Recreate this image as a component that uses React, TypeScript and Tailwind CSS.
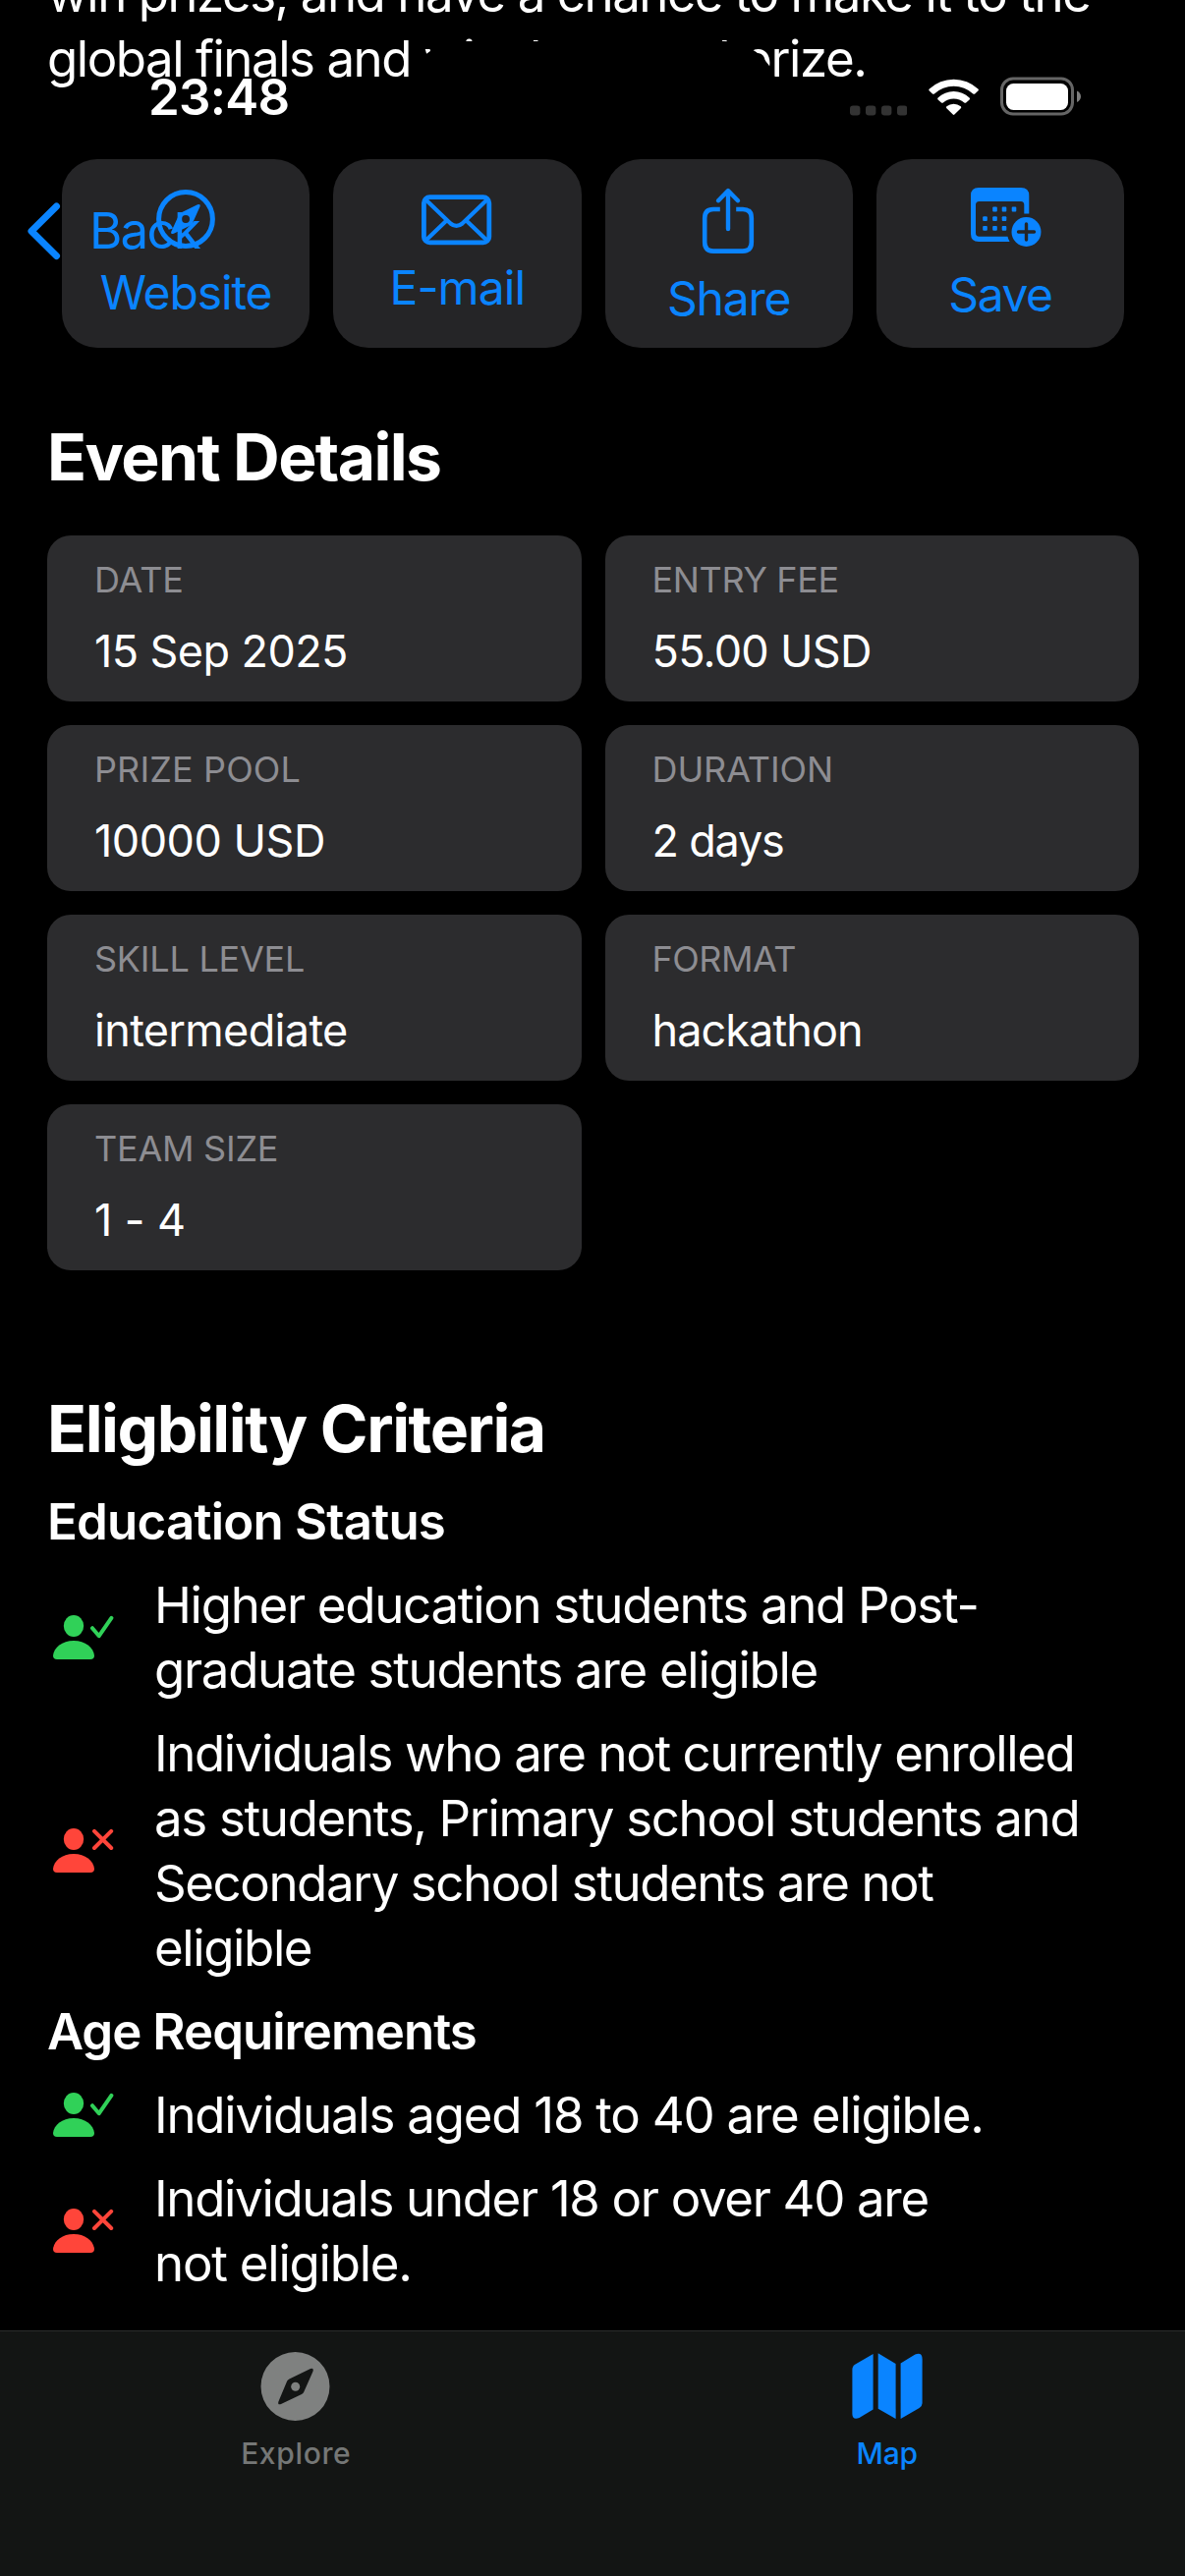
import type { ReactNode } from "react";

function CompassIcon() {
  return (
    <svg width="100" height="83" viewBox="0 0 100 83" fill="none">
      <circle cx="50" cy="37" r="27.4" stroke="#0a84ff" strokeWidth="5" />
      <path
        fillRule="evenodd"
        d="M62 22.2Q65.6 21 64.4 24.4L56.8 41.4Q56.2 42.8 54.8 43.6L37.8 51.8Q34.2 53 35.4 49.6L43.2 32.6Q43.8 31.2 45.2 30.4ZM50 33a4 4 0 1 0 0 8a4 4 0 1 0 0-8Z"
        fill="#0a84ff"
      />
    </svg>
  );
}

function EnvelopeIcon() {
  return (
    <svg width="100" height="78" viewBox="0 0 100 78" fill="none" stroke="#0a84ff" strokeWidth="4.8">
      <rect x="16.4" y="14.7" width="66.4" height="46.2" rx="6" />
      <path d="M18 17L43.5 41.5Q49.5 46.2 55.5 41.5L81 17M18 59L40.5 37.5M81 59L58.5 37.5" strokeWidth="4.2" />
    </svg>
  );
}

function ShareIcon() {
  return (
    <svg width="100" height="89" viewBox="0 0 100 89" fill="none" stroke="#0a84ff" strokeWidth="4.6">
      <path d="M40.8 27H34Q25.2 27 25.2 36V60.5Q25.2 69.6 34 69.6H64Q72.8 69.6 72.8 60.5V36Q72.8 27 64 27H57.2" />
      <path d="M49 8.5V47M39 18.2L49 8L59 18.2" strokeLinecap="round" strokeLinejoin="round" strokeWidth="4.4" />
    </svg>
  );
}

function CalendarPlusIcon() {
  const dots: [number, number][] = [
    [44.5, 27], [54, 27], [64, 27],
    [34.5, 36.7], [44.5, 36.7], [54, 36.7],
    [34.5, 46.3], [44.5, 46.3], [54, 46.3],
  ];
  return (
    <svg width="100" height="85" viewBox="0 0 100 85" fill="none">
      <path
        d="M28 5H71Q79.3 5 79.3 13V31.5H74.3V22.5Q74.3 19 71 19H28.5Q25 19 25 22.5V51Q25 54.8 28.5 54.8H57.5Q58 57.6 59.6 60H28Q20 60 20 52V13Q20 5 28 5Z"
        fill="#0a84ff"
      />
      {dots.map(([x, y]) => (
        <rect key={`${x}-${y}`} x={x - 2.3} y={y - 2.4} width="4.6" height="4.8" rx="1" fill="#0a84ff" />
      ))}
      <circle cx="76.5" cy="50" r="15" fill="#0a84ff" />
      <path d="M76.5 42V58M68.5 50H84.5" stroke="#252527" strokeWidth="3.4" strokeLinecap="round" />
    </svg>
  );
}

function PersonIcon({ ok }: { ok: boolean }) {
  const color = ok ? "#30d158" : "#ff453a";
  return (
    <svg className="mb-0.5 shrink-0" width="62" height="45" viewBox="0 0 62 45" fill="none">
      <ellipse cx="21" cy="11" rx="10.2" ry="11" fill={color} />
      <path d="M0 41C1 33 9 26 21 26S41 33 42 41Q42 45 38 45H4Q0 45 0 41Z" fill={color} />
      <path
        d={ok ? "M40 13.2L46.8 21.2L59.4 2.8" : "M42 2.8L59.2 20M59.2 2.8L42 20"}
        stroke={color}
        strokeWidth="4"
        strokeLinecap="round"
        strokeLinejoin="round"
      />
    </svg>
  );
}

function Action({ icon, label, tracking }: { icon: ReactNode; label: string; tracking: string }) {
  return (
    <button className="flex h-48 flex-col items-center rounded-[36px] bg-[#252527] pt-6">
      {icon}
      <span className={`text-5xl leading-[58px] text-[#0a84ff] ${tracking}`}>{label}</span>
    </button>
  );
}

const details = [
  ["DATE", "15 Sep 2025", "tracking-[-0.19px]", "tracking-[-0.58px]"],
  ["ENTRY FEE", "55.00 USD", "tracking-[-0.35px]", "tracking-[-0.71px]"],
  ["PRIZE POOL", "10000 USD", "tracking-[0.13px]", "tracking-[-0.49px]"],
  ["DURATION", "2 days", "tracking-[-0.09px]", "tracking-[-1.2px]"],
  ["SKILL LEVEL", "intermediate", "tracking-[-0.23px]", "tracking-[-0.66px]"],
  ["FORMAT", "hackathon", "tracking-[-0.51px]", "tracking-[-0.92px]"],
  ["TEAM SIZE", "1 - 4", "tracking-[-0.25px]", "tracking-[-0.08px]"],
];

function Criterion({ ok, lines }: { ok: boolean; lines: [string, string][] }) {
  return (
    <li className="flex items-center gap-[41px] pl-1.5">
      <PersonIcon ok={ok} />
      <p>
        {lines.map(([text, tracking]) => (
          <span key={text} className={`block whitespace-nowrap ${tracking}`}>
            {text}
          </span>
        ))}
      </p>
    </li>
  );
}

function StatusBar() {
  return (
    <div className="flex h-[66px] items-start pl-[151px]">
      <span className="w-[714px] text-[51px] leading-[66px] font-semibold tracking-[-0.72px]">23:48</span>
      <svg className="mt-[41px]" width="58" height="11" viewBox="0 0 58 11" fill="#333333">
        <rect x="0" y="0.5" width="10.4" height="10" rx="3.2" />
        <rect x="16" y="0.5" width="10.4" height="10" rx="3.2" />
        <rect x="32" y="0.5" width="10.4" height="10" rx="3.2" />
        <rect x="48" y="0.5" width="10.4" height="10" rx="3.2" />
      </svg>
      <svg className="mt-[13px] ml-[22px]" width="52" height="39" viewBox="0 0 52 39" fill="#fff">
        <path d="M0.8 11.6A36 36 0 0 1 50.4 11.6Q51.4 12.6 50.4 13.6L47.2 16.4Q46.3 17.2 45.3 16.4A29 29 0 0 0 5.9 16.4Q4.9 17.2 4 16.4L0.8 13.6Q-0.2 12.6 0.8 11.6Z" />
        <path d="M9.6 20.4A23.5 23.5 0 0 1 41.6 20.4Q42.6 21.4 41.6 22.4L38.2 25.4Q37.3 26.2 36.3 25.4A16.5 16.5 0 0 0 14.9 25.4Q13.9 26.2 13 25.4L9.6 22.4Q8.6 21.4 9.6 20.4Z" />
        <path d="M18.4 29.2A11.5 11.5 0 0 1 32.8 29.2Q33.8 30.2 32.8 31.2L26.4 37.6Q25.6 38.4 24.8 37.6L18.4 31.2Q17.4 30.2 18.4 29.2Z" />
      </svg>
      <svg className="mt-3 ml-[21px]" width="84" height="40" viewBox="0 0 84 40" fill="none">
        <rect x="1.5" y="2" width="72" height="36" rx="11.5" stroke="#656565" strokeWidth="3" />
        <rect x="6" y="7" width="63" height="27" rx="7.5" fill="#fff" />
        <path d="M78 14.5Q82 16.5 82 20.3T78 26Z" fill="#7d7d7d" />
      </svg>
    </div>
  );
}

export default function App() {
  return (
    <div className="relative flex h-[2622px] w-[1206px] flex-col overflow-hidden bg-black font-['Inter',sans-serif] text-white">
      <main className="-mt-[39px] flex-1 px-12 text-[51px] leading-[66px]">
        <p className="whitespace-nowrap">
          <span className="block tracking-[-1.46px]">win prizes, and have a chance to make it to the</span>
          <span className="block tracking-[-1.46px]">global finals and win the grand prize.</span>
        </p>

        <div className="mt-[69px] grid grid-cols-4 gap-6 pr-3.5 pl-[15px]">
          <Action icon={<CompassIcon />} label="Website" tracking="tracking-[-1.1px]" />
          <Action icon={<EnvelopeIcon />} label="E-mail" tracking="tracking-[-0.9px]" />
          <Action icon={<ShareIcon />} label="Share" tracking="tracking-[-1.2px]" />
          <Action icon={<CalendarPlusIcon />} label="Save" tracking="tracking-[-1.5px]" />
        </div>

        <h2 className="mt-[71px] text-[66px] leading-[80px] font-bold tracking-[-1.6px]">Event Details</h2>
        <dl className="mt-10 -mr-px grid grid-cols-2 gap-6">
          {details.map(([label, value, labelTracking, valueTracking]) => (
            <div key={label} className="h-[169px] rounded-3xl bg-[#2c2c2e] px-12 pt-[23px]">
              <dt className={`text-4xl leading-[44px] text-[#8d8d92] ${labelTracking}`}>{label}</dt>
              <dd className={`mt-6 text-[45px] leading-[54px] ${valueTracking}`}>{value}</dd>
            </div>
          ))}
        </dl>

        <h2 className="mt-[121px] text-[66px] leading-[80px] font-bold tracking-[-1.45px]">Eligbility Criteria</h2>
        <h3 className="mt-[22px] font-semibold tracking-[-0.8px]">Education Status</h3>
        <ul className="mt-[19px] flex flex-col gap-[19px]">
          <Criterion
            ok
            lines={[
              ["Higher education students and Post-", "tracking-[-1.3px]"],
              ["graduate students are eligible", "tracking-[-1.31px]"],
            ]}
          />
          <Criterion
            ok={false}
            lines={[
              ["Individuals who are not currently enrolled", "tracking-[-1.42px]"],
              ["as students, Primary school students and", "tracking-[-1.33px]"],
              ["Secondary school students are not", "tracking-[-1.44px]"],
              ["eligible", "tracking-[-1.4px]"],
            ]}
          />
        </ul>
        <h3 className="mt-[19px] font-semibold tracking-[-0.98px]">Age Requirements</h3>
        <ul className="mt-[19px] flex flex-col gap-[19px]">
          <Criterion ok lines={[["Individuals aged 18 to 40 are eligible.", "tracking-[-1.23px]"]]} />
          <Criterion
            ok={false}
            lines={[
              ["Individuals under 18 or over 40 are", "tracking-[-1.33px]"],
              ["not eligible.", "tracking-[-1.24px]"],
            ]}
          />
        </ul>
      </main>

      <nav className="grid h-[250px] grid-cols-2 border-t border-[#2a2c2c] bg-[#131514] pr-px text-3xl leading-9 font-medium">
        <a className="flex flex-col items-center pt-[19px] text-[#757776]">
          <svg width="80" height="74" viewBox="0 0 80 74">
            <path
              fillRule="evenodd"
              d="M39.5 2a35 35 0 1 0 0 70a35 35 0 1 0 0-70ZM55 19Q58.6 18 57.5 21.8L48.2 42.8Q47.6 44.2 46 45L25 55Q21.4 56.2 22.4 52.4L31.2 31.6Q31.8 30.2 33.4 29.4Z"
              fill="#7f8180"
            />
            <circle cx="39.7" cy="37.2" r="4.5" fill="#7f8180" />
          </svg>
          <span className="mt-[13px] tracking-[0.65px]">Explore</span>
        </a>
        <a className="flex flex-col items-center pt-[19px] text-[#0a84ff]">
          <svg width="80" height="74" viewBox="0 0 80 74" fill="#0a84ff">
            <path d="M24.6 4V60.5L10.5 69Q3.4 71.5 3.4 65V20Q3.4 16.4 6.5 14.5Z" />
            <path d="M29.7 3.3L47.6 14V70L29.7 59.8Z" />
            <path d="M52.6 13.6L67.3 4.5Q74.6 2 74.6 9V54Q74.6 57 71.6 59L52.6 70Z" />
          </svg>
          <span className="mt-[13px] pr-0.5 tracking-[-0.2px]">Map</span>
        </a>
      </nav>

      {/* Status and navigation bars float above the scrolled content */}
      <header className="absolute inset-x-0 top-0 pt-[66px]">
        <div className="absolute top-[42px] left-[414px] h-[111px] w-[378px] rounded-full bg-black" />
        <StatusBar />
        <button className="mt-[70px] ml-7 flex items-center text-[51px] leading-[66px] tracking-[-1.8px] text-[#0a84ff]">
          <svg width="35" height="60" viewBox="0 0 35 60" fill="none">
            <path
              d="M29.5 5L4 30.3L29.5 55.5"
              stroke="#0a84ff"
              strokeWidth="7"
              strokeLinecap="round"
              strokeLinejoin="round"
            />
          </svg>
          <span className="ml-7">Back</span>
        </button>
      </header>
    </div>
  );
}
